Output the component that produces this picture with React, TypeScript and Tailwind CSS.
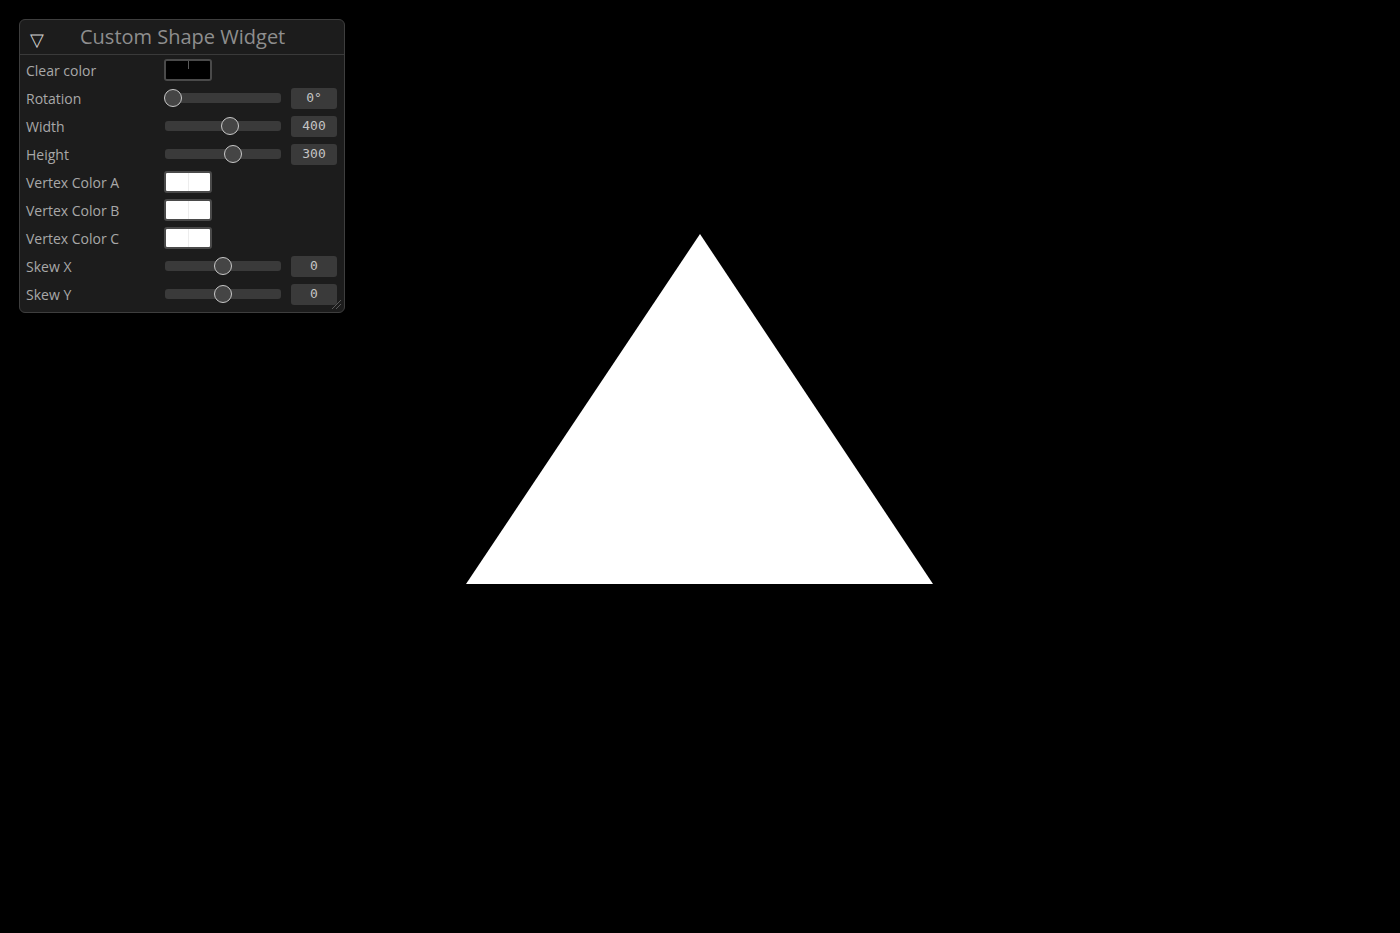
const sliders: Record<string, { knob: number; value: string }> = {
  Rotation: { knob: 173, value: "0°" },
  Width: { knob: 230, value: "400" },
  Height: { knob: 233, value: "300" },
  "Skew X": { knob: 223, value: "0" },
  "Skew Y": { knob: 223, value: "0" },
};

type Row = { label: string; kind: "color" | "slider"; color?: string };

const rows: Row[] = [
  { label: "Clear color", kind: "color", color: "#000000" },
  { label: "Rotation", kind: "slider" },
  { label: "Width", kind: "slider" },
  { label: "Height", kind: "slider" },
  { label: "Vertex Color A", kind: "color", color: "#ffffff" },
  { label: "Vertex Color B", kind: "color", color: "#ffffff" },
  { label: "Vertex Color C", kind: "color", color: "#ffffff" },
  { label: "Skew X", kind: "slider" },
  { label: "Skew Y", kind: "slider" },
];

function Swatch({ color }: { color: string }) {
  const dark = color === "#000000";
  return (
    <div className="flex h-[22px] w-[48px] overflow-hidden rounded-[3px] border-2 border-[#4a4a4a]">
      <div className="flex-1" style={{ background: color }} />
      {dark ? (
        <div className="flex w-px flex-col">
          <div className="h-[8px] bg-[#5a5a5a]" />
          <div className="flex-1 bg-black" />
        </div>
      ) : (
        <div className="w-px bg-[#ededed]" />
      )}
      <div className="flex-1" style={{ background: color }} />
    </div>
  );
}

function Slider({ knob, value }: { knob: number; value: string }) {
  // knob is given as absolute page x; track starts at x=165
  const left = knob - 165 - 9;
  return (
    <div className="flex items-center">
      <div className="relative ml-px h-[10px] w-[116px] rounded-[3px] bg-[#3a3a3a]">
        <div
          className="absolute top-1/2 h-[18px] w-[18px] -translate-y-1/2 rounded-full border-[1.5px] border-[#c8c8c8] bg-[#454545]"
          style={{ left }}
        />
      </div>
      <div className="ml-[10px] flex h-[21px] w-[46px] items-center justify-center rounded-[3px] bg-[#3a3a3a] font-['DejaVu_Sans_Mono',monospace] text-[13px] text-[#c4c4c4]">
        {value}
      </div>
    </div>
  );
}

export default function App() {
  return (
    <div className="relative h-[933px] w-[1400px] overflow-hidden bg-black font-['Open_Sans',sans-serif]">
      <svg className="absolute inset-0" width={1400} height={933}>
        <polygon points="700,234 466,584 933,584" fill="#ffffff" />
      </svg>

      <div className="absolute left-[19px] top-[19px] flex w-[326px] flex-col rounded-[6px] border border-[#3e3e3e] bg-[#1c1c1c] pb-[4px]">
        <div className="flex h-[35px] items-center border-b border-[#3a3a3a] pl-[10px]">
          <span className="mt-[3px] text-[18px] leading-none text-[#d0d0d0]">▽</span>
          <span className="ml-[36px] text-[20px] leading-none text-[#8e8e8e]">
            Custom Shape Widget
          </span>
        </div>
        <div className="pt-px">
          {rows.map((r) => (
            <div key={r.label} className="flex h-[28px] items-center pl-[6px]">
              <div className="w-[138px] text-[14px] text-[#a8a8a8]">{r.label}</div>
              {r.kind === "color" ? (
                <Swatch color={r.color!} />
              ) : (
                <Slider knob={sliders[r.label].knob} value={sliders[r.label].value} />
              )}
            </div>
          ))}
        </div>
        <svg className="absolute bottom-[2px] right-[2px]" width={12} height={12}>
          <line x1="2" y1="11" x2="11" y2="2" stroke="#5a5a5a" strokeWidth="1" />
          <line x1="6" y1="11" x2="11" y2="6" stroke="#5a5a5a" strokeWidth="1" />
        </svg>
      </div>
    </div>
  );
}
